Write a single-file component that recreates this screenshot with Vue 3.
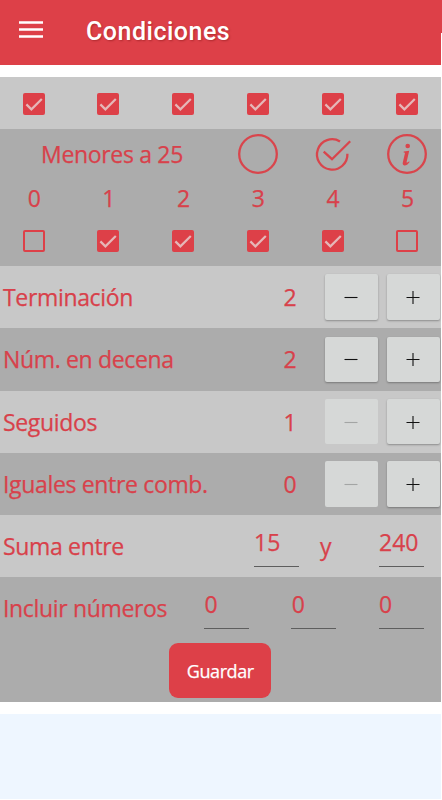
<template>
  <div class="screen">
    <header class="toolbar">
      <svg class="menu" viewBox="0 0 24 18" width="24" height="18">
        <path d="M0 1.5h24M0 8.5h24M0 15.5h24" stroke="#fff" stroke-width="2.3" />
      </svg>
      <h1 class="title">Condiciones</h1>
      <span class="edge"></span>
    </header>

    <main class="panel">
      <div class="row-checks light">
        <div v-for="(on, i) in pares" :key="i" class="cell">
          <button class="check" :class="{ on }" @click="pares[i] = !on">
            <svg v-if="on" viewBox="0 0 22 22" width="22" height="22">
              <path d="M3.4 11.4l5 5L18.8 6" />
            </svg>
          </button>
        </div>
      </div>

      <section class="menores">
        <div class="six head">
          <div class="head-label">Menores a 25</div>
          <div class="cell">
            <svg class="icon" viewBox="0 0 40 40" width="40" height="40">
              <circle cx="20" cy="20" r="18.8" />
            </svg>
          </div>
          <div class="cell">
            <svg class="icon" viewBox="0 0 40 40" width="40" height="40">
              <path d="M27 7.4A15.2 15.2 0 1 0 34.4 19.8" />
              <path d="M10.7 17.6l8.3 7.6L37.2 7.3" />
            </svg>
          </div>
          <div class="cell">
            <svg class="icon" viewBox="0 0 40 40" width="40" height="40">
              <circle cx="20" cy="20" r="18.8" />
              <circle class="solid" cx="20.7" cy="12" r="2.3" />
              <path class="solid" d="M16.8 17.5l5.4-.8-2.6 11.2c-.2 1 .7 1.1 2.4-.7l.6.7c-1.7 2.6-3.5 3.6-5.2 3.5-1.7-.2-2-1.4-1.5-3.4l2-8.6c.2-.8-.2-1-1.3-1z" />
            </svg>
          </div>
        </div>
        <div class="six digits">
          <div v-for="(m, i) in menores" :key="i" class="cell">{{ i }}</div>
        </div>
        <div class="six boxes">
          <div v-for="(on, i) in menores" :key="i" class="cell">
            <button class="check" :class="{ on }" @click="menores[i] = !on">
              <svg v-if="on" viewBox="0 0 22 22" width="22" height="22">
                <path d="M3.4 11.4l5 5L18.8 6" />
              </svg>
            </button>
          </div>
        </div>
      </section>

      <div v-for="(c, i) in contadores" :key="c.label" class="row" :class="{ light: i % 2 === 0 }">
        <span class="label">{{ c.label }}</span>
        <span class="value">{{ c.valor }}</span>
        <button class="step" :disabled="c.valor <= c.min" @click="c.valor--">
          <svg viewBox="0 0 14 14" width="14" height="14"><path d="M.5 7.5h13" /></svg>
        </button>
        <button class="step" @click="c.valor++">
          <svg viewBox="0 0 14 14" width="14" height="14"><path d="M.5 7.5h13M7 1v13" /></svg>
        </button>
      </div>

      <div class="row light suma">
        <span class="label">Suma entre</span>
        <input v-model="suma.desde" class="field" />
        <span class="y">y</span>
        <input v-model="suma.hasta" class="field" />
      </div>

      <div class="row incluir">
        <span class="label">Incluir números</span>
        <input v-for="(n, i) in incluir" :key="i" v-model="incluir[i]" class="field" />
      </div>

      <div class="actions">
        <button class="save">Guardar</button>
      </div>
    </main>

    <footer class="banner"></footer>
  </div>
</template>

<script setup>
import { reactive } from 'vue'

const pares = reactive([true, true, true, true, true, true])
const menores = reactive([false, true, true, true, true, false])

const contadores = reactive([
  { label: 'Terminación', valor: 2, min: 0 },
  { label: 'Núm. en decena', valor: 2, min: 0 },
  { label: 'Seguidos', valor: 1, min: 1 },
  { label: 'Iguales entre comb.', valor: 0, min: 0 }
])

const suma = reactive({ desde: '15', hasta: '240' })
const incluir = reactive(['0', '0', '0'])
</script>

<style>
body {
  background: #fff;
  overflow: hidden;
}
</style>

<style scoped>
.screen {
  width: 442px;
  height: 800px;
  overflow: hidden;
  font-family: "Open Sans", "Noto Sans", sans-serif;
  font-size: 23px;
  color: #d8414b;
  -webkit-text-stroke: 0.25px currentColor;
}

button,
input {
  font: inherit;
  color: inherit;
  border: 0;
  padding: 0;
  margin: 0;
  box-sizing: border-box;
}

.toolbar {
  position: relative;
  display: flex;
  height: 64.5px;
  background: #dd4048;
  color: #fff;
}

.menu {
  margin: 21px 0 0 19px;
}

.title {
  margin: 17px 0 0 43px;
  font: 500 25px/30px Roboto, sans-serif;
  letter-spacing: 0.5px;
  text-shadow: 1px 1px 2px rgba(90, 0, 0, 0.35);
  -webkit-text-stroke: 0;
}

/* thin white strip that starts below the status area */
.edge {
  position: absolute;
  right: 0;
  top: 33px;
  bottom: 0;
  width: 1.5px;
  background: #fff;
}

.panel {
  width: 440.5px;
  height: 624.5px;
  margin-top: 12.5px;
  background: #acacac;
  overflow: hidden;
}

.light {
  background: #c8c8c8;
}

.row-checks,
.six {
  display: grid;
  grid-template-columns: repeat(6, 74.7px);
  align-items: center;
}

.row-checks {
  height: 52px;
  padding-top: 2px;
  box-sizing: border-box;
}

.cell {
  display: flex;
  justify-content: center;
  margin-left: -7.2px;
}

.menores {
  height: 137px;
}

.head {
  height: 50px;
}

.head-label {
  grid-column: span 3;
  text-align: center;
  letter-spacing: -0.33px;
}

.digits {
  height: 38px;
}

.digits .cell {
  padding-left: 1px;
}

.boxes {
  height: 48px;
}

.check {
  display: flex;
  width: 22px;
  height: 22px;
  border: 2px solid #dd4048;
  border-radius: 2px;
  background: transparent;
}

.check.on {
  border: 0;
  background: #dd4048;
}

.check path {
  fill: none;
  stroke: #e5b7b8;
  stroke-width: 2.2;
}

.icon {
  fill: none;
  stroke: #d9454c;
  stroke-width: 2.3;
}

.icon .solid {
  fill: #d9454c;
  stroke: none;
}

.row {
  display: flex;
  align-items: center;
  height: 62.25px;
  padding-left: 3px;
  box-sizing: border-box;
}

.label {
  flex: 1;
  white-space: nowrap;
  letter-spacing: -0.34px;
}

.value {
  width: 20px;
  margin-right: 25px;
  text-align: center;
}

.step {
  display: flex;
  align-items: center;
  justify-content: center;
  width: 52.5px;
  height: 45.5px;
  margin-right: 9.5px;
  border-radius: 2px;
  background: #d6d8d7;
  box-shadow: 0 1px 2px rgba(0, 0, 0, 0.3);
}

.step:last-child {
  margin-right: 1px;
}

.step path {
  stroke: #111;
  stroke-width: 1.1;
}

.step:disabled {
  box-shadow: none;
}

.step:disabled path {
  stroke: #a3a5a4;
}

.field {
  flex: none;
  width: 45px;
  height: 41px;
  margin-top: 1px;
  padding-bottom: 9px;
  padding-left: 0.5px;
  border-bottom: 1px solid #5e5e5e;
  border-radius: 0;
  background: transparent;
  outline: 0;
}

.suma .field:last-child,
.incluir .field:last-child {
  margin-right: 17px;
}

.y {
  width: 80px;
  box-sizing: border-box;
  padding-left: 21.5px;
}

.incluir .field + .field {
  margin-left: 42.3px;
}

.actions {
  display: flex;
  justify-content: center;
  padding-top: 3.5px;
}

.save {
  width: 102px;
  height: 55px;
  border-radius: 9px;
  background: #dd4048;
  color: #fff;
  font-size: 18px;
  letter-spacing: -0.4px;
}

.banner {
  width: 440.5px;
  height: 85px;
  margin-top: 12.5px;
  background: #eef6ff;
}
</style>
